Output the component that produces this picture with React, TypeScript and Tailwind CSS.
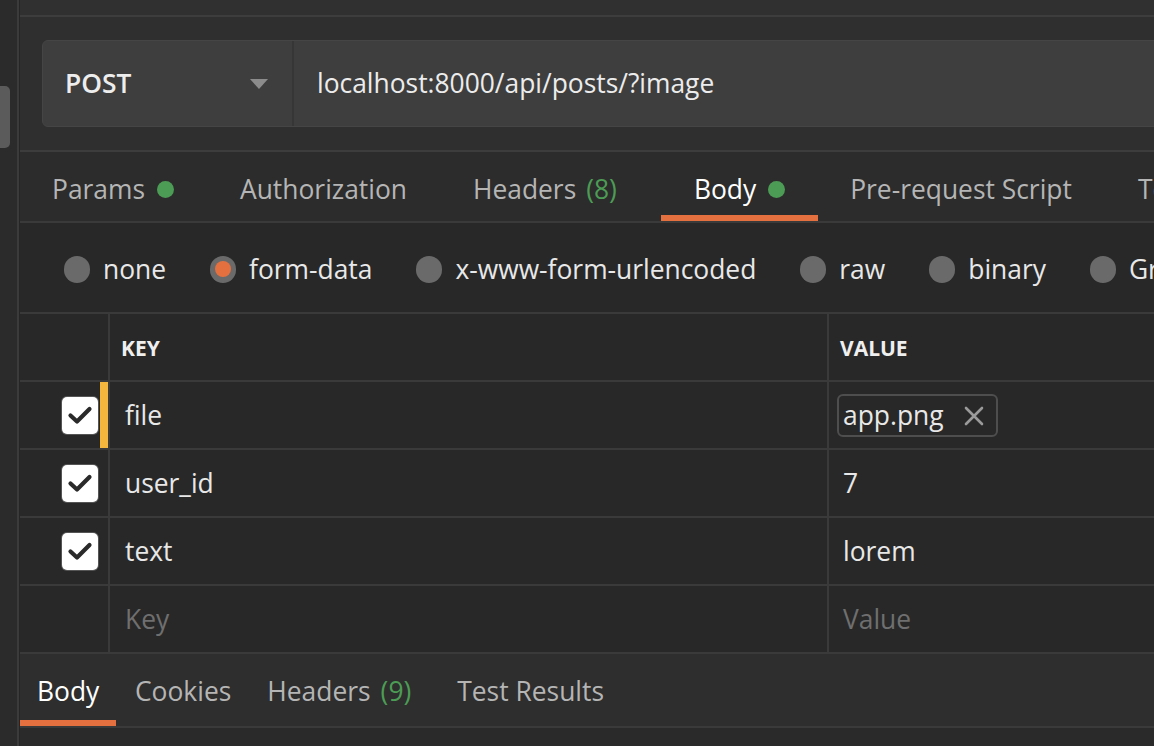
import React from "react";

const Dot = () => <span className="ml-3 inline-block h-[17px] w-[17px] rounded-full bg-[#4c9c55]" />;

function Radio({ label, selected }: { label: string; selected?: boolean }) {
  return (
    <div className="flex shrink-0 items-center">
      <span className="flex h-[27px] w-[26px] items-center justify-center rounded-full bg-[#6a6a6a]">
        {selected && <span className="h-[16px] w-[16px] rounded-full bg-[#e5703f]" />}
      </span>
      <span className="ml-[13px] text-[26.4px] text-[#e8e8e8]">{label}</span>
    </div>
  );
}

function Check() {
  return (
    <span className="flex h-[37px] w-[36px] items-center justify-center rounded-[5px] bg-white ring-1 ring-[#555]">
      <svg width="26" height="22" viewBox="0 0 26 22">
        <path d="M3.5 11.5 L10 17.5 L22.5 5" fill="none" stroke="#2a2a2a" strokeWidth="4.2" strokeLinecap="round" strokeLinejoin="round" />
      </svg>
    </span>
  );
}

function Row({ k, v, marked, chip, placeholder }: { k: string; v: string; marked?: boolean; chip?: boolean; placeholder?: boolean }) {
  return (
    <div className="flex h-[68px] border-b-2 border-[#3a3a3a]">
      <div className="flex w-[88px] shrink-0 items-stretch justify-end">
        {!placeholder && (
          <div className="flex items-center pr-[2px]">
            <Check />
          </div>
        )}
        <div className={`w-[8px] ${marked ? "bg-[#f4b63c]" : ""}`} />
      </div>
      <div className="flex w-[719px] shrink-0 items-center border-l-2 border-[#3a3a3a] pl-[15px] pt-[1px]">
        <span className={`text-[26.4px] ${placeholder ? "text-[#6f6f6f]" : "text-[#e8e8e8]"}`}>{k}</span>
      </div>
      <div className="flex flex-1 items-center border-l-2 border-[#3a3a3a] pl-[14px] pt-[1px]">
        {chip ? (
          <div className="-ml-[6px] flex h-[43px] items-center rounded-[6px] border-2 border-[#4e4e4e] pl-[4px] pr-[12px]">
            <span className="text-[26.4px] text-[#e8e8e8]">{v}</span>
            <svg className="ml-[20px]" width="20" height="20" viewBox="0 0 20 20">
              <path d="M2 2 L18 18 M18 2 L2 18" stroke="#9a9a9a" strokeWidth="2.6" strokeLinecap="round" />
            </svg>
          </div>
        ) : (
          <span className={`text-[26.4px] ${placeholder ? "text-[#6f6f6f]" : "text-[#e8e8e8]"}`}>{v}</span>
        )}
      </div>
    </div>
  );
}

export default function App() {
  return (
    <div className="flex h-[746px] w-[1154px] overflow-hidden bg-[#2b2b2b]" style={{ fontFamily: '"Open Sans", "Noto Sans", sans-serif' }}>
      <div className="flex w-[17px] shrink-0 flex-col bg-[#2b2b2b] pt-[86px]">
        <div className="h-[62px] w-[10px] rounded-r-[5px] bg-[#5b5b5b]" />
      </div>
      <div className="w-[2px] shrink-0 bg-[#3b3b3b]" />
      <div className="w-[1px] shrink-0 bg-[#262626]" />
      <div className="flex min-w-0 flex-1 flex-col">
        <div className="h-[15px] shrink-0 bg-[#303030]" />
        <div className="h-[2px] shrink-0 bg-[#3d3d3d]" />
        <div className="flex h-[133px] shrink-0 items-start bg-[#2f2f2f] pl-[22px] pt-[23px]">
          <div className="flex h-[87px] w-[1200px] shrink-0 rounded-[6px] border border-[#454545] bg-[#3e3e3e]">
            <div className="flex w-[251px] shrink-0 items-center border-r-2 border-[#363636] pl-[22px] pr-[24px]">
              <span className="text-[26.4px] font-semibold text-[#ededed]">POST</span>
              <svg className="ml-auto" width="18" height="10" viewBox="0 0 18 10">
                <path d="M0 0 H18 L9 10 Z" fill="#8c8c8c" />
              </svg>
            </div>
            <div className="flex items-center pl-[23px]">
              <span className="text-[26.4px] text-[#ececec]">localhost:8000/api/posts/?image</span>
            </div>
          </div>
        </div>
        <div className="h-[2px] shrink-0 bg-[#3d3d3d]" />
        <div className="flex h-[69px] shrink-0 items-stretch whitespace-nowrap bg-[#2c2c2c] pl-[32px] text-[26.4px] text-[#b5b5b5]">
          <div className="flex shrink-0 items-center border-b-[6px] border-transparent pt-[12px] pr-[66px]">
            Params <Dot />
          </div>
          <div className="flex shrink-0 items-center border-b-[6px] border-transparent pt-[12px] pr-[66px]">Authorization</div>
          <div className="flex shrink-0 items-center border-b-[6px] border-transparent pt-[12px] pr-[44px]">
            Headers <span className="ml-[10px] text-[#4c9c55]">(8)</span>
          </div>
          <div className="flex shrink-0 items-center border-b-[6px] border-[#e5703f] px-[33px] pt-[12px] text-white">
            Body <Dot />
          </div>
          <div className="flex shrink-0 items-center border-b-[6px] border-transparent pl-[32px] pr-[66px] pt-[12px]">Pre-request Script</div>
          <div className="flex shrink-0 items-center border-b-[6px] border-transparent pt-[12px]">Tests</div>
        </div>
        <div className="h-[2px] shrink-0 bg-[#3a3a3a]" />
        <div className="flex h-[89px] shrink-0 items-center gap-[44px] whitespace-nowrap bg-[#282828] pl-[44px] pt-[4px]">
          <Radio label="none" />
          <Radio label="form-data" selected />
          <Radio label="x-www-form-urlencoded" />
          <Radio label="raw" />
          <Radio label="binary" />
          <Radio label="GraphQL" />
        </div>
        <div className="h-[2px] shrink-0 bg-[#3a3a3a]" />
        <div className="flex shrink-0 flex-col bg-[#282828]">
          <div className="flex h-[68px] border-b-2 border-[#3a3a3a]">
            <div className="w-[88px] shrink-0" />
            <div className="flex w-[719px] shrink-0 items-center border-l-2 border-[#3a3a3a] pl-[11px] pt-[4px]">
              <span className="text-[21px] font-bold text-[#efefef]">KEY</span>
            </div>
            <div className="flex flex-1 items-center border-l-2 border-[#3a3a3a] pl-[11px] pt-[4px]">
              <span className="text-[21px] font-bold text-[#efefef]">VALUE</span>
            </div>
          </div>
          <Row k="file" v="app.png" marked chip />
          <Row k="user_id" v="7" />
          <Row k="text" v="lorem" />
          <Row k="Key" v="Value" placeholder />
        </div>
        <div className="flex h-[72px] shrink-0 items-stretch whitespace-nowrap bg-[#2e2e2e] text-[26.4px] text-[#b5b5b5]">
          <div className="flex w-[96px] shrink-0 items-center border-b-[6px] border-[#e5703f] pl-[17px] pt-[10px] text-white">Body</div>
          <div className="flex shrink-0 items-center border-b-[6px] border-transparent pl-[19px] pr-[36px] pt-[10px]">Cookies</div>
          <div className="flex shrink-0 items-center border-b-[6px] border-transparent pr-[46px] pt-[10px]">
            Headers <span className="ml-[10px] text-[#4c9c55]">(9)</span>
          </div>
          <div className="flex shrink-0 items-center border-b-[6px] border-transparent pt-[10px]">Test Results</div>
        </div>
        <div className="h-[2px] shrink-0 bg-[#3a3a3a]" />
        <div className="flex-1 bg-[#2a2a2a]" />
      </div>
    </div>
  );
}
